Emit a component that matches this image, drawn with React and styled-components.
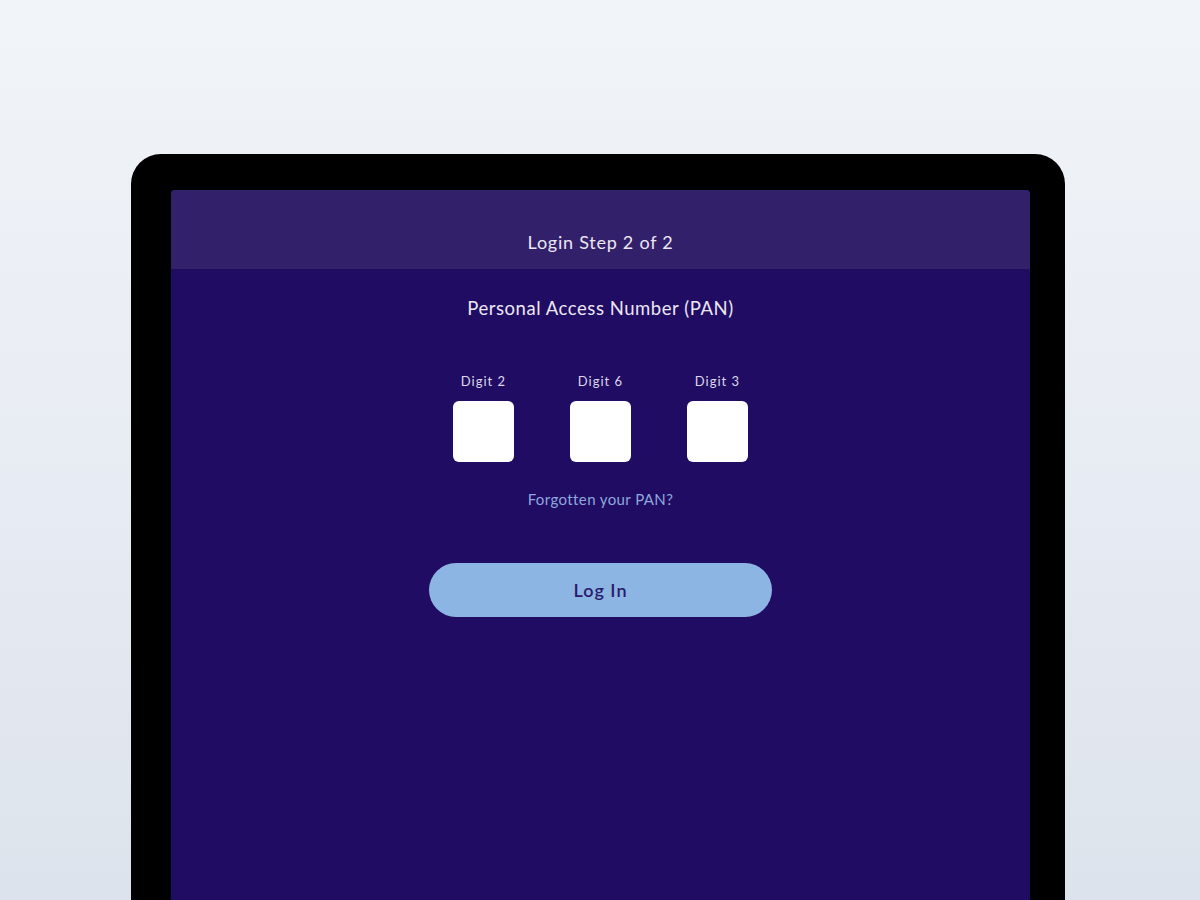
import React from "react"
import styled, { createGlobalStyle } from "styled-components"

const GlobalStyle = createGlobalStyle`
  html, body {
    margin: 0;
    padding: 0;
    height: 100%;
  }
  body {
    font-family: Lato, "Noto Sans", sans-serif;
    background: linear-gradient(180deg, #f1f4f8 0%, #e8ecf3 50%, #dde3ec 100%);
    overflow: hidden;
  }
`;

const Page = styled.div`
  height: 900px;
  display: flex;
  justify-content: center;
  padding: 154px 4px 0 0;
  box-sizing: border-box;
  overflow: hidden;
`;

const Device = styled.div`
  width: 934px;
  height: 800px;
  background: #000;
  border-radius: 30px 30px 0 0;
  padding: 36px 35px 0 40px;
  box-sizing: border-box;
  display: flex;
`;

const Screen = styled.div`
  flex: 1;
  background: #200c63;
  border-radius: 4px 4px 0 0;
  overflow: hidden;
  display: flex;
  flex-direction: column;
  align-items: center;
`;

const Header = styled.div`
  align-self: stretch;
  height: 79px;
  background: #33206a;
  display: flex;
  align-items: center;
  justify-content: center;
  color: #ebe7f3;
  font-size: 18px;
  letter-spacing: 0.75px;
  padding-top: 24px;
  box-sizing: border-box;
`;

const Title = styled.div`
  margin-top: 27px;
  color: #ebe7f3;
  font-size: 18.5px;
  line-height: 24px;
  letter-spacing: 0.55px;
`;

const Digits = styled.div`
  margin-top: 53px;
  display: flex;
  gap: 56px;
`;

const DigitField = styled.div`
  display: flex;
  flex-direction: column;
  align-items: center;
  gap: 12px;
`;

const DigitLabel = styled.div`
  color: #ddd8ea;
  font-size: 13px;
  line-height: 16px;
  letter-spacing: 1px;
`;

const DigitBox = styled.div`
  width: 61px;
  height: 61px;
  background: #fff;
  border-radius: 6px;
`;

const Forgot = styled.a`
  margin-top: 28px;
  color: #8ea8de;
  font-size: 15px;
  line-height: 18px;
  letter-spacing: 0.4px;
  text-decoration: none;
`;

const LoginButton = styled.button`
  margin-top: 55px;
  width: 343px;
  height: 54px;
  border: none;
  border-radius: 27px;
  background: #8db5e3;
  color: #2a1a6c;
  font-family: inherit;
  font-size: 18px;
  font-weight: 600;
  letter-spacing: 1px;
`;

const App = () => {
  const digits = [2, 6, 3];
  return (
    <>
      <GlobalStyle />
      <Page>
        <Device>
          <Screen>
            <Header>Login Step 2 of 2</Header>
            <Title>Personal Access Number (PAN)</Title>
            <Digits>
              {digits.map((d) => (
                <DigitField key={d}>
                  <DigitLabel>Digit {d}</DigitLabel>
                  <DigitBox />
                </DigitField>
              ))}
            </Digits>
            <Forgot href="#">Forgotten your PAN?</Forgot>
            <LoginButton>Log In</LoginButton>
          </Screen>
        </Device>
      </Page>
    </>
  );
};

export default App
